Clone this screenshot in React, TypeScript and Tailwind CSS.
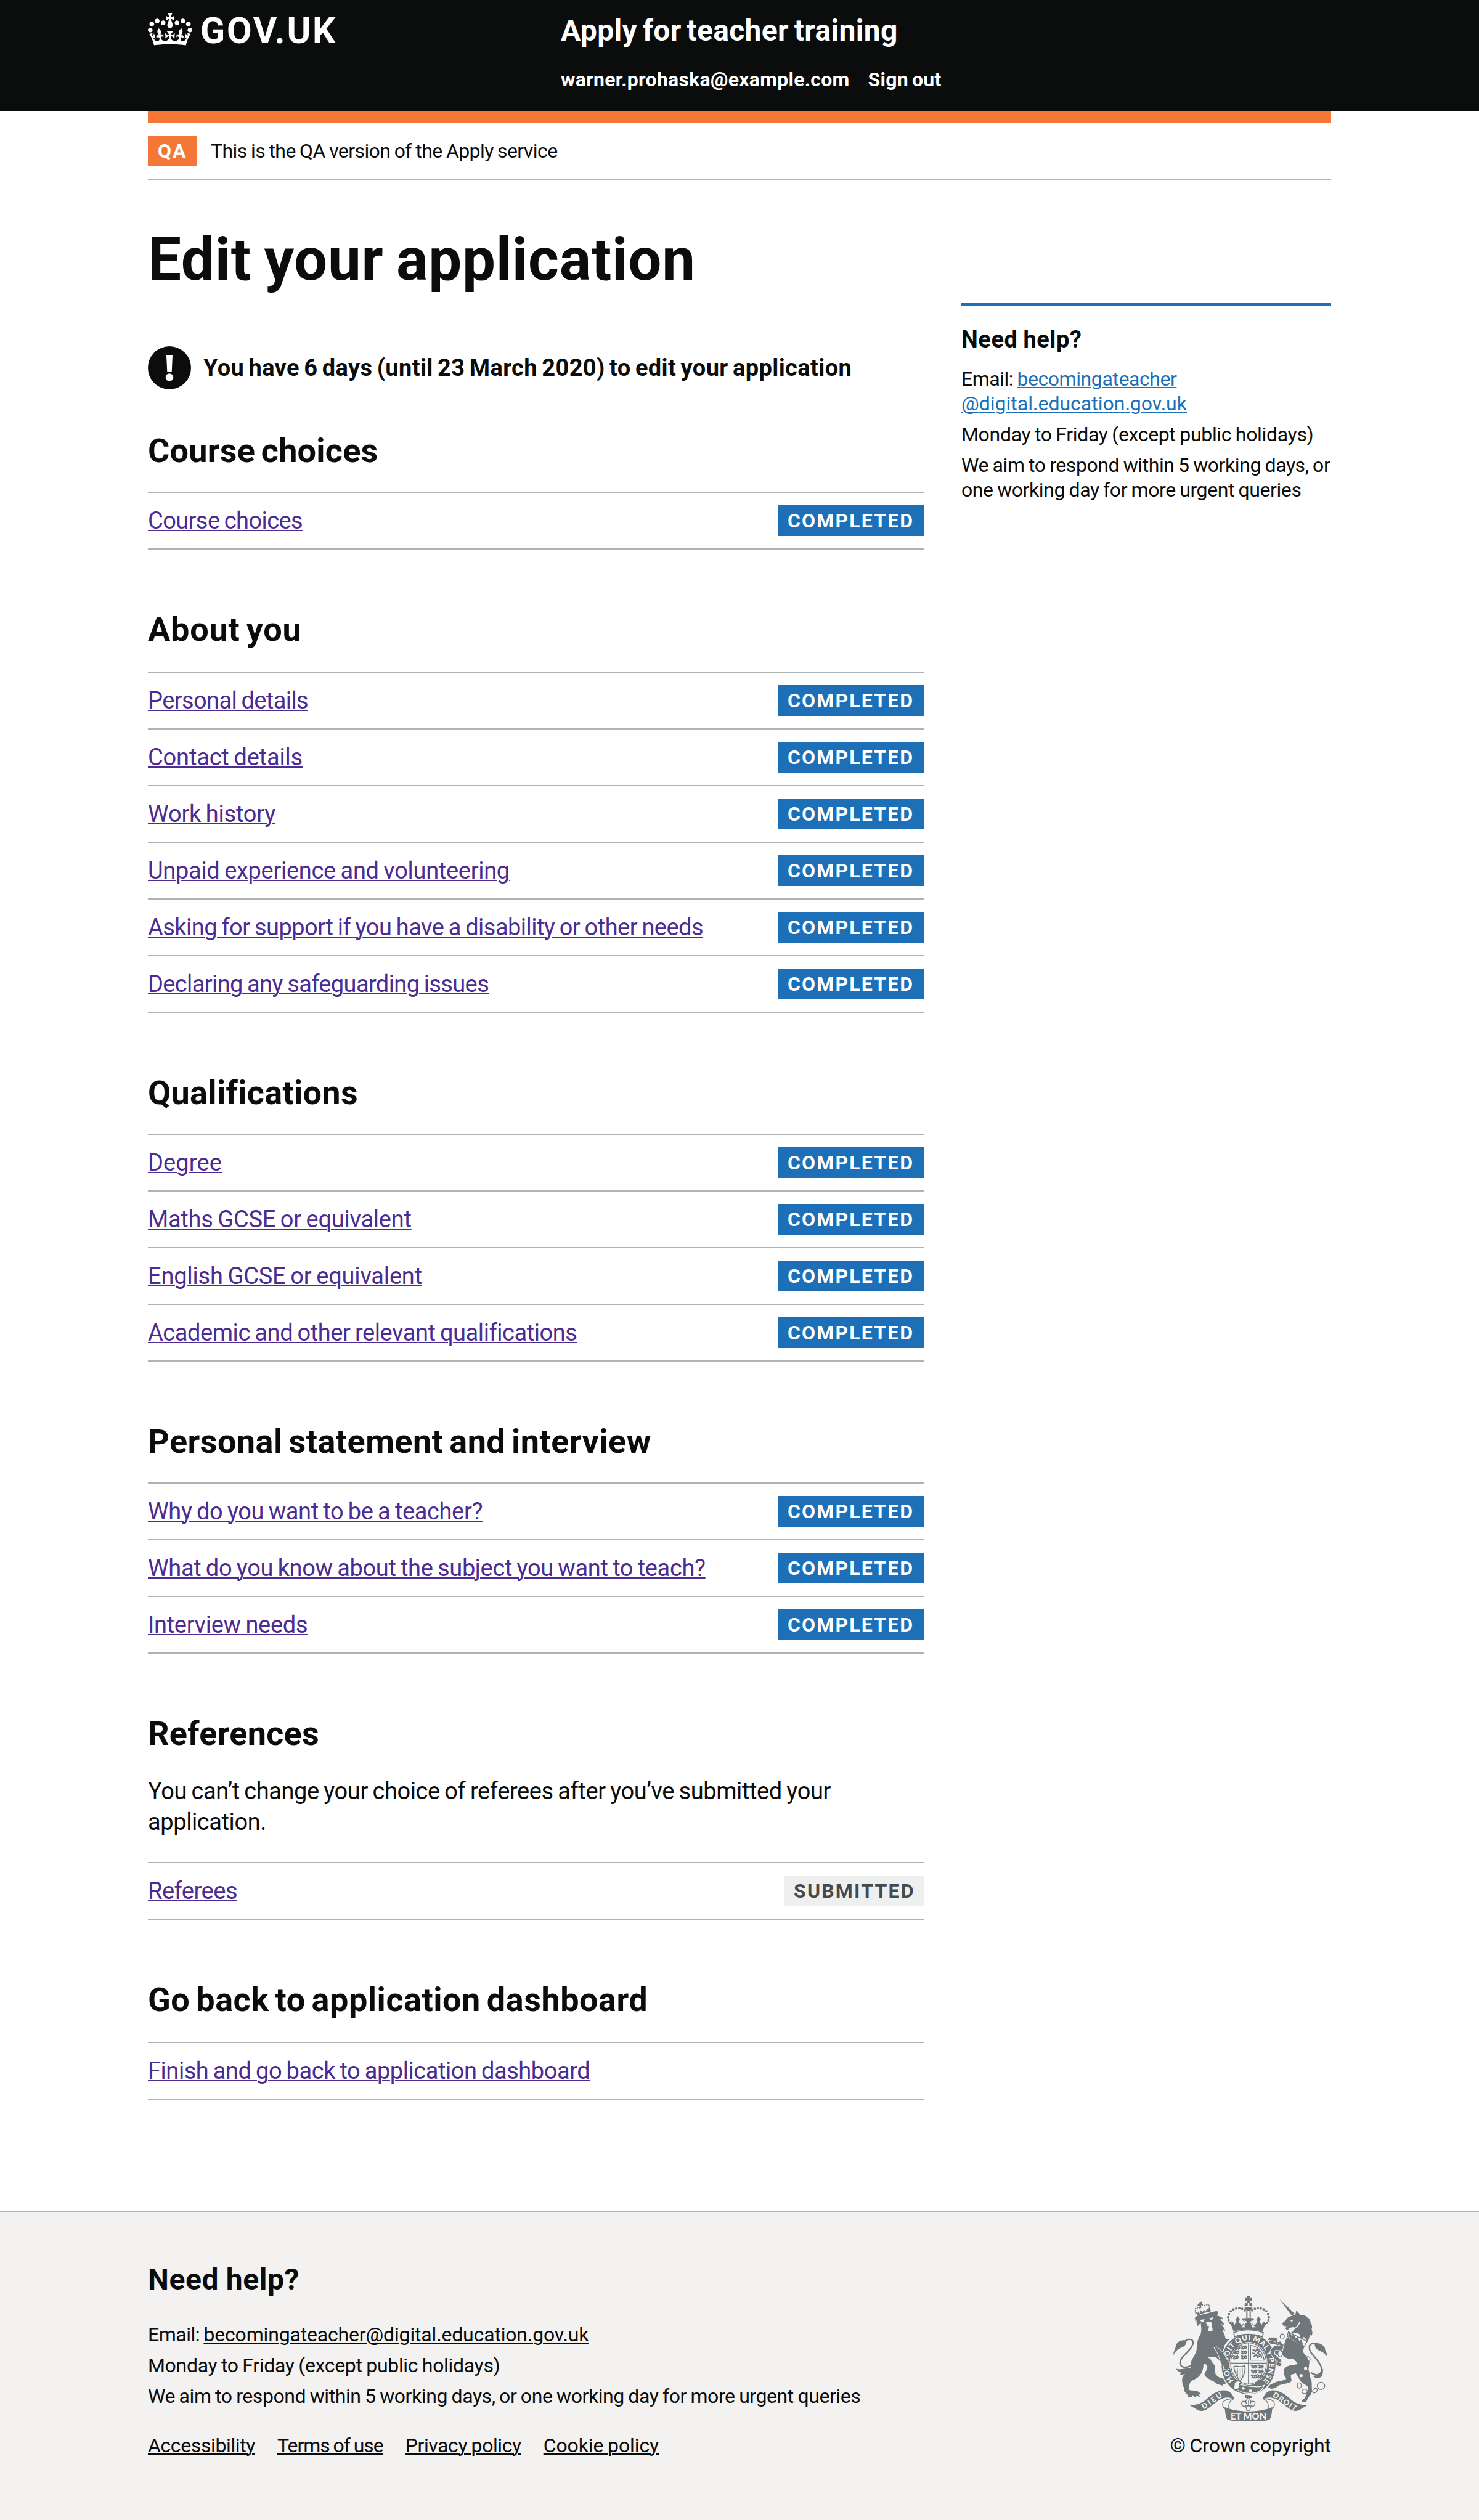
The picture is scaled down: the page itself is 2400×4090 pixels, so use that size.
import type { ReactNode } from 'react';

type Status = 'Completed' | 'Submitted';

interface Task {
  label: string;
  tracking: string;
  status?: Status;
}

interface TaskSection {
  title: string;
  tracking: string;
  spacing: string;
  intro?: ReactNode;
  tasks: Task[];
}

const sections: TaskSection[] = [
  {
    title: 'Course choices',
    tracking: 'tracking-[0.23px]',
    spacing: 'mt-[70px] mb-9',
    tasks: [{ label: 'Course choices', tracking: 'tracking-[-0.59px]', status: 'Completed' }],
  },
  {
    title: 'About you',
    tracking: 'tracking-[0.76px]',
    spacing: 'mt-[100px] mb-[38px]',
    tasks: [
      { label: 'Personal details', tracking: 'tracking-[-0.6px]', status: 'Completed' },
      { label: 'Contact details', tracking: 'tracking-[-0.17px]', status: 'Completed' },
      { label: 'Work history', tracking: 'tracking-[-0.21px]', status: 'Completed' },
      { label: 'Unpaid experience and volunteering', tracking: 'tracking-[-0.3px]', status: 'Completed' },
      {
        label: 'Asking for support if you have a disability or other needs',
        tracking: 'tracking-[-0.53px]',
        status: 'Completed',
      },
      { label: 'Declaring any safeguarding issues', tracking: 'tracking-[-0.62px]', status: 'Completed' },
    ],
  },
  {
    title: 'Qualifications',
    tracking: 'tracking-[0.31px]',
    spacing: 'mt-[100px] mb-9',
    tasks: [
      { label: 'Degree', tracking: 'tracking-[0.12px]', status: 'Completed' },
      { label: 'Maths GCSE or equivalent', tracking: 'tracking-[-0.24px]', status: 'Completed' },
      { label: 'English GCSE or equivalent', tracking: 'tracking-[-0.18px]', status: 'Completed' },
      { label: 'Academic and other relevant qualifications', tracking: 'tracking-[-0.44px]', status: 'Completed' },
    ],
  },
  {
    title: 'Personal statement and interview',
    tracking: 'tracking-[0.45px]',
    spacing: 'mt-[100px] mb-9',
    tasks: [
      { label: 'Why do you want to be a teacher?', tracking: 'tracking-[-0.38px]', status: 'Completed' },
      {
        label: 'What do you know about the subject you want to teach?',
        tracking: 'tracking-[-0.36px]',
        status: 'Completed',
      },
      { label: 'Interview needs', tracking: 'tracking-[-0.3px]', status: 'Completed' },
    ],
  },
  {
    title: 'References',
    tracking: 'tracking-[0.27px]',
    spacing: 'mt-[100px] mb-[38px]',
    intro: (
      <p className="mb-10 text-[38px] leading-[50px] tracking-[-0.4px] [word-spacing:-1.5px]">
        You can’t change your choice of referees after you’ve submitted your
        <br />
        application.
      </p>
    ),
    tasks: [{ label: 'Referees', tracking: 'tracking-[-0.49px]', status: 'Submitted' }],
  },
  {
    title: 'Go back to application dashboard',
    tracking: 'tracking-[0.52px]',
    spacing: 'mt-[100px] mb-[38px]',
    tasks: [{ label: 'Finish and go back to application dashboard', tracking: 'tracking-[-0.45px]' }],
  },
];

const footerLinks = [
  { label: 'Accessibility', tracking: 'tracking-[-0.39px]' },
  { label: 'Terms of use', tracking: 'tracking-[-1.05px]' },
  { label: 'Privacy policy', tracking: 'tracking-[-0.43px]' },
  { label: 'Cookie policy', tracking: 'tracking-[-0.12px]' },
];

function CrownIcon() {
  return (
    <svg viewBox="0 0 132 97" className="h-[53px] w-[72px]" fill="currentColor" aria-hidden="true">
      <path d="M25 30.2c3.5 1.5 7.7-.2 9.1-3.7 1.5-3.6-.2-7.8-3.9-9.2-3.6-1.4-7.6.3-9.1 3.9-1.4 3.5.3 7.5 3.9 9zM9 39.5c3.6 1.5 7.8-.2 9.2-3.7 1.5-3.6-.2-7.8-3.9-9.1-3.6-1.5-7.6.2-9.1 3.8-1.4 3.5.3 7.5 3.8 9zM4.4 57.2c3.5 1.5 7.7-.2 9.1-3.8 1.5-3.6-.2-7.7-3.9-9.1-3.5-1.5-7.6.3-9.1 3.8-1.4 3.5.3 7.6 3.9 9.1zm38.3-21.4c3.5 1.5 7.7-.2 9.1-3.8 1.5-3.6-.2-7.7-3.9-9.1-3.6-1.5-7.6.3-9.1 3.8-1.3 3.6.4 7.7 3.9 9.1zm64.4-5.6c-3.6 1.5-7.8-.2-9.1-3.7-1.5-3.6.2-7.8 3.8-9.2 3.6-1.4 7.7.3 9.2 3.9 1.3 3.5-.4 7.5-3.9 9zm15.9 9.3c-3.6 1.5-7.7-.2-9.1-3.7-1.5-3.6.2-7.8 3.7-9.1 3.6-1.5 7.7.2 9.2 3.8 1.5 3.5-.3 7.5-3.8 9zm4.7 17.7c-3.6 1.5-7.8-.2-9.2-3.8-1.5-3.6.2-7.7 3.9-9.1 3.6-1.5 7.7.3 9.2 3.8 1.3 3.5-.4 7.6-3.9 9.1zM89.3 35.8c-3.6 1.5-7.8-.2-9.2-3.8-1.4-3.6.2-7.7 3.9-9.1 3.6-1.5 7.7.3 9.2 3.8 1.4 3.6-.3 7.7-3.9 9.1zM69.7 17.7l8.9 4.7V9.3l-8.9 2.8c-.2-.3-.5-.6-.9-.9L72.4 0H59.6l3.5 11.2c-.3.3-.6.5-.9.9l-8.8-2.8v13.1l8.8-4.7c.3.3.6.7.9.9l-5 15.4v.1c-.2.8-.4 1.6-.4 2.4 0 4.1 3.1 7.5 7 8.1h.2c.3 0 .7.1 1 .1.4 0 .7 0 1-.1h.2c4-.6 7.1-4.1 7.1-8.1 0-.8-.1-1.7-.4-2.4V34l-5.1-15.4c.4-.2.7-.6 1-.9zM66 92.8c16.9 0 32.8 1.1 47.1 3.2 4-16.9 8.9-26.7 14-33.5l-9.6-3.4c1 4.9 1.1 7.2 0 10.2-1.5-1.4-3-4.3-4.2-8.7L108.6 76c2.8-2 5-3.2 7.5-3.3-4.4 9.4-10 11.9-13.6 11.2-4.3-.8-6.3-4.6-5.6-7.9 1-4.7 5.7-5.9 8-.5 4.3-8.7-3-11.4-7.6-8.8 7.1-7.2 7.9-13.5 2.1-21.1-8 6.1-8.1 12.3-4.5 20.8-4.7-5.4-12.1-2.5-9.5 6.2 3.4-5.2 7.9-2 7.2 3.1-.6 4.3-6.4 7.8-13.5 7.2-10.3-.9-10.9-8-11.2-13.8 2.5-.5 7.1 1.8 11 7.3L80.2 60c-4.1 4.4-8 5.3-12.3 5.4 1.4-4.4 8-11.6 8-11.6H55.5s6.4 7.2 7.9 11.6c-4.2-.1-8-1-12.3-5.4l1.4 16.4c3.9-5.5 8.5-7.7 10.9-7.3-.3 5.8-.9 12.8-11.1 13.8-7.2.6-12.9-2.9-13.5-7.2-.7-5 3.8-8.3 7.1-3.1 2.7-8.7-4.6-11.6-9.4-6.2 3.7-8.5 3.6-14.7-4.6-20.8-5.8 7.6-5 13.9 2.2 21.1-4.7-2.6-11.9.1-7.7 8.8 2.3-5.5 7.1-4.2 8.1.5.7 3.3-1.3 7.1-5.7 7.9-3.5.7-9-1.8-13.5-11.2 2.5.1 4.7 1.3 7.5 3.3l-4.7-15.4c-1.2 4.4-2.7 7.2-4.3 8.7-1.1-3-.9-5.3 0-10.2l-9.5 3.4c5 6.9 9.9 16.7 14 33.5 14.8-2.1 30.8-3.2 47.7-3.2z" />
    </svg>
  );
}

function WarningIcon() {
  return (
    <svg viewBox="0 0 70 70" className="size-[70px] shrink-0" aria-hidden="true">
      <circle cx="35" cy="35" r="35" fill="#0b0c0c" />
      <path d="M30 14h10l-1.3 28h-7.4z" fill="#fff" />
      <circle cx="35" cy="50.5" r="6.2" fill="#fff" />
    </svg>
  );
}

const crownPearls: [number, number][] = [
  [420, 149], [407, 142], [393, 139], [378, 140], [364, 145], [352, 154], [343, 167], [339, 182], [341, 197], [348, 210],
];

const heraldicLions: [number, number][] = [
  [368, 332], [364, 354], [360, 378], [400, 330], [400, 354], [400, 378],
  [450, 424], [450, 448], [450, 472], [482, 424], [482, 448], [478, 470],
];

function RoyalArms() {
  const ink = '#6f777b';
  const paper = '#f3f2f1';
  return (
    <svg viewBox="72 78 750 612" className="h-[204px] w-[250px]" role="img" aria-label="Royal coat of arms">
      <defs>
        <path id="garter" d="M438 526 A100 116 0 0 1 438 294 A100 116 0 0 1 438 526" />
      </defs>

      {/* Lion's tail */}
      <g fill="none" stroke={ink} strokeWidth="7">
        <path d="M178 405c-30 25-62 28-72 8-14-36 68-72 62-112-4-14-28-14-44 2" />
      </g>
      <path fill={ink} d="M72 367c0-22 14-34 12-48 8-18 28-30 52-22 0 14-6 26-18 30-18 8-34 16-46 40zM84 432c22 10 34-2 62 0 12-2 16-10 20-16-4 24-20 38-36 42-8 3-16 5-26 3l6-8c-12-4-20-10-26-21z" />

      {/* Lion */}
      <path
        fill={ink}
        d="M174 192l12-16 96-24 6 3v12l-4 8c12 2 24 8 34 17l-18 1c10 8 17 18 21 30l-17-8c10 13 18 22 21 34l-15-5c4 10 12 22 14 34 1 8 5 12 20 13-10 10-20 22-26 35 12 18 22 40 26 58l5 28 2 22-12 8-20-4-10-14 8-6-12-12c-8-10-14-24-32-30-10-3-24 2-34 2 10 6 16 8 18 18l10 14c8 4 12 18 6 30 0 14 8 26 20 34 12 6 24 4 32 14l10 10-12 3 6 9-14-2-2 8-28-8c-8-10-18-12-30-18-12-10-26-14-32-28 4-14 14-22 15-38l-10-16-9 4c-1 22-5 40-20 56-12 14-28 18-42 28-8 12-10 26-8 40 12 6 32 0 46 10l14 12-12 1 4 11-16-4-6 8-12-12-8 12-14-4-6-12c-12-8-16-20-15-32-8-14-10-28-9-46 4-14 12-24 28-28 14-12 14-36 16-54 8-20 22-34 26-56 2-30 4-50 20-78 6-22 2-38 0-54l-14 16c-6-10-8-20-5-32l-7 8c-2-14 0-24 5-34z"
      />
      <g fill={paper}>
        <path d="M200 196l24-4-4 12c-8 4-14-1-20-8zM246 188l22-6-6 11c-8 4-13 0-16-5zM226 212c10-8 24-6 36-2l-4 12 6 22c-2 10-18 12-22 2l4-20-16-4 8-6z" />
      </g>

      {/* Lion's crown */}
      <path fill={ink} d="M180 158l8 10 4-14 8 10 6-16 8 12 6-16 8 12 8-14 12-4 6 10-2 8c-20 2-42 8-60 19z" />
      <g fill="none" stroke={ink} strokeWidth="8" strokeLinecap="round" strokeDasharray="0.1 10.5">
        <path d="M182 162c-8-22 2-32 22-24M248 146c2-24-10-34-30-14" />
      </g>
      <path fill={ink} d="M198 110l14-4 2 6-5 3 8 4-2 8-8-3 1 14-7 1-2-14-7 5-3-8 8-4-1-4z" />

      {/* Unicorn's tail */}
      <g fill="none" stroke={ink} strokeWidth="7">
        <path d="M742 452c26 22 56 10 51-22-10-48-70-70-57-110 8-14 30-12 42 0" />
      </g>
      <path fill={ink} d="M822 377c0-22-12-28-12-44-10-18-30-28-50-22 0 16 8 28 22 34 16 6 28 14 40 32zM752 470c14 14 36 12 46-4l4-34c-10 18-24 30-50 38z" />

      {/* Unicorn */}
      <path fill={ink} d="M588 93l74 72-14 10z" />
      <path
        fill={ink}
        d="M601 213l18-15c6-14 16-18 30-22l18-8 3-18 10 8 10 14c14-2 26 2 34 12 12 6 16 16 16 28 8 8 10 18 5 28l4 16-2 16c-6-2-8-4-12-2 0 12-4 26-14 38-2-14-4-22-14-30-4 8-6 14-6 24-8-8-14-20-12-34-8-8-20-10-30-9l-12-2c10-4 12-16 14-30-4 6-16 4-22 8l-12 12-10-10 8-10-16-2z"
      />
      <circle cx="648" cy="199" r="5" fill={paper} />
      <path fill="none" stroke={paper} strokeWidth="5" d="M630 250c26-6 50-18 58-46" />
      <path fill={paper} stroke={ink} strokeWidth="4" d="M632 254l90 46-12 24-84-48z" />
      <path fill={ink} d="M630 274l10-20 8 20 12-8 6 20 12-8 6 20 12-6 6 20-2 6z" />
      <path
        fill={ink}
        d="M624 280l86 45-8 26c14 18 28 32 32 52l-4 36c8 18 6 36 14 52 4 16 0 34 4 52l-8 18c-10 8-16 22-22 36h-20l2-12 14-10c4-20 14-28 14-50-2-10-22-18-34-28l-26-42-24 8c-2 16 8 26 0 34-14 8-36 10-56 16-10 8-20 16-38 18l-18-6 12-14 30-14c20-4 36-6 48-14-10-14-14-28-12-44 8-16 24-22 46-24l22-4c-6-12-14-18-20-24-22 2-42-6-56-22-10-6-24-6-30 2l14 22 14 20-8 12-16-4c-10-14-20-22-26-38l-6-28-16-6 2-10c10-2 18 2 24 6l28-4 26 2-18-16-22-8c-10-6-22-2-32 0l-10-10 12-10 22 2c16 4 28 14 38 26l14 4c0-12 2-26 10-38z"
      />
      <g fill={paper}>
        <circle cx="586" cy="297" r="7" />
        <circle cx="716" cy="432" r="8" />
        <circle cx="694" cy="467" r="8" />
      </g>
      <g fill="none" stroke={ink} strokeWidth="4">
        <ellipse cx="602" cy="277" rx="10" ry="13" />
        <ellipse cx="725" cy="387" rx="13" ry="12" />
        <ellipse cx="685" cy="515" rx="10" ry="13" />
        <ellipse cx="711" cy="544" rx="13" ry="11" />
        <ellipse cx="761" cy="540" rx="13" ry="9" transform="rotate(-45 761 540)" />
        <circle cx="791" cy="517" r="18" />
      </g>

      {/* Garter */}
      <path fill={ink} stroke={paper} strokeWidth="5" d="M438 262c80 0 134 62 134 146 0 88-56 152-134 152-80 0-134-64-134-152 0-84 56-146 134-146z" />
      <ellipse cx="438" cy="408" rx="92" ry="105" fill={paper} />
      <text fill={paper} fontFamily="Lato, sans-serif" fontWeight="900" fontSize="36" wordSpacing="-4">
        <textPath href="#garter" startOffset="82" textLength="518">HON SOIT QUI MAL Y PENSE</textPath>
      </text>

      {/* Shield */}
      <ellipse cx="438" cy="408" rx="87" ry="100" fill="none" stroke={ink} strokeWidth="4" />
      <path fill="none" stroke={ink} strokeWidth="5" d="M438 308v200M351 407h174" />
      <g fill="none" stroke={ink} strokeWidth="5" strokeLinejoin="round">
        {heraldicLions.map(([x, y]) => (
          <path key={`${x}-${y}`} d={`M${x} ${y - 4}l6-5 5 6 8-2 6 3M${x + 3} ${y + 7}l5-7 3 8 7-7 5 8M${x + 22} ${y - 10}l6 8-3 8`} />
        ))}
        <path strokeWidth="4" d="M448 392v-72c36 4 60 34 66 72z" />
        <path strokeWidth="7" d="M458 340l14 8 8-10 10 12-8 8 14 8 8 14M464 376l12-12 6 14 10-6M456 358l12 2" />
        <path strokeWidth="5" d="M366 424c18-10 30 8 52-6l4 12c-2 30-12 46-26 66-10-20-26-40-30-72z" />
        <path strokeWidth="3" d="M376 430l2 26M384 432l1 38M392 434v48M400 434v50M408 432v38" />
      </g>
      <path fill={ink} d="M462 514l26-30 26 22c-12 10-20 14-32 16z" />

      {/* Buckle */}
      <path fill={ink} stroke={paper} strokeWidth="4" d="M376 506c28 4 50 12 76 14 24 2 40 4 62-6l-12 22c-38 26-90 22-126-6z" />
      <g fill={paper}>
        <circle cx="412" cy="529" r="7" />
        <circle cx="447" cy="541" r="7" />
      </g>
      <path fill={paper} stroke={ink} strokeWidth="6" d="M372 500c8-12 26-10 30 2-8 2-10 8-8 14 2 8-4 20-16 20-14 0-18-14-10-22-2-4 0-10 4-14z" />

      {/* Lion's forepaw over the garter */}
      <path fill={ink} stroke={paper} strokeWidth="3" d="M282 326c22 16 40 34 48 58l14 20 2 28-10 8-22-4 4-12-16-16c-4-24-14-54-32-76z" />

      {/* Unicorn's forelegs over the garter */}
      <path
        fill={ink}
        stroke={paper}
        strokeWidth="3"
        d="M528 294l12-14 24 0c18 6 28 16 36 30l10 6-6 30-36-2c-6 6-6 14 0 22l30 24 2 16-18-6-30-28c-8-14-10-26-4-36l18-14 26-2-28-20z"
      />
      <circle cx="584" cy="297" r="7" fill={paper} />
      <ellipse cx="592" cy="361" rx="11" ry="15" fill={paper} stroke={ink} strokeWidth="4" />

      {/* Imperial crown */}
      <path fill={paper} stroke={ink} strokeWidth="5" d="M366 258c44-18 100-18 144 0l-4 20c-42-16-94-16-136 0z" />
      <path
        fill={ink}
        d="M366 254l-10-28-10-14 10 2-2-12 10 6 6 12 10-16-6-10 12-16 10 16-6 12 14 16 10-8 8 8-2-14-12-12v-8l28-2 28 2v8l-12 12-2 14 8-8 10 8 14-16-6-12 10-16 12 16-6 10 10 16 6-12 10-6-2 12 10-2-10 14-10 28c-46-16-98-16-144 0z"
      />
      <path fill={paper} d="M400 232l16-14 6 14zM474 232l-16-14-6 14zM418 196l14 10-14 12zM458 196l-14 10 14 12z" />
      <g fill={ink}>
        {crownPearls.map(([x, y]) => (
          <g key={`${x}-${y}`}>
            <circle cx={x} cy={y} r="6" />
            <circle cx={876 - x} cy={y} r="6" />
          </g>
        ))}
        <path d="M427 150h6v36h-6zM443 150h6v36h-6zM418 132h40c-2 12-10 20-20 20s-18-8-20-20zM418 128c2-12 8-18 16-19v19zM458 128c-2-12-8-18-16-19v19z" />
        <path d="M428 78h20l-6 12 14-6v22l-14-6 4 12h-16l4-12-14 6V84l14 6z" />
      </g>

      {/* Pendant fleur-de-lis */}
      <path fill={ink} d="M421 560l34 4v12h-34z" />
      <path
        fill={paper}
        stroke={ink}
        strokeWidth="4"
        d="M438 572l12 20-4 12c8-18 24-16 24 0-2 10-8 14-14 12l-8 6-4 14h-14l-4-14-8-6c-8 2-14-4-14-12 0-16 18-18 24 0l-4-12z"
      />
      <path fill={ink} d="M436 586h4v26h-4zM420 612h36v5h-36z" />

      {/* Motto ribbon */}
      <g fill={paper} stroke={ink} strokeWidth="4">
        <path d="M366 580c-26-2-52 6-54 24-1 12 6 22 12 24l20-4c-6-14 0-34 22-44zM510 580c26-2 52 6 54 24 1 12-6 22-12 24l-20-4c6-14 0-34-22-44z" />
      </g>
      <g fill={ink}>
        <path d="M147 609c42 4 66-8 92-32 26-24 58-42 88-38 22 4 34 18 42 42-18-8-38-10-52-4-30 8-52 36-82 54-12 8-26 10-40 6zM729 609c-42 4-66-8-92-32-26-24-58-42-88-38-22 4-34 18-42 42 18-8 38-10 52-4 30 8 52 36 82 54 12 8 26 10 40 6z" />
        <path d="M322 620c64 28 168 28 232 0-2 24-4 44-12 60-14 14-190 14-208 0-8-16-10-36-12-60z" />
      </g>
      <g fill={paper} fontFamily="Lato, sans-serif" fontWeight="900" textAnchor="middle">
        <text fontSize="36" transform="translate(266 600) rotate(-34)" textLength="112">DIEU</text>
        <text fontSize="36" transform="translate(608 603) rotate(34)" textLength="132">DROIT</text>
        <text fontSize="44" x="438" y="680" textLength="174">ET MON</text>
      </g>
    </svg>
  );
}

function StatusTag({ status }: { status: Status }) {
  return status === 'Completed' ? (
    <strong className="block h-[50px] w-[238px] bg-[#1d70b8] pl-4 text-[32px] leading-[50px] font-bold tracking-[2.15px] text-white uppercase">
      {status}
    </strong>
  ) : (
    <strong className="block h-[50px] w-[228px] bg-[#eeefef] pl-4 text-[32px] leading-[50px] font-bold tracking-[2.2px] text-[#454a4d] uppercase">
      {status}
    </strong>
  );
}

function TaskList({ section }: { section: TaskSection }) {
  return (
    <section>
      <h2 className={`${section.spacing} ${section.tracking} text-[54px] leading-[60px] font-bold [word-spacing:-4px]`}>
        {section.title}
      </h2>
      {section.intro}
      <ul className="border-t-2 border-[#b1b4b6]">
        {section.tasks.map((task) => (
          <li key={task.label} className="flex h-[92px] items-center justify-between border-b-2 border-[#b1b4b6]">
            <a
              href="#"
              className={`${task.tracking} text-[38px] leading-[50px] text-[#4c2c92] underline decoration-2 underline-offset-2 [word-spacing:-1.5px]`}
            >
              {task.label}
            </a>
            {task.status && <StatusTag status={task.status} />}
          </li>
        ))}
      </ul>
    </section>
  );
}

function Header() {
  return (
    <header className="h-[180px] bg-[#0b0c0c] text-white">
      <div className="mx-auto flex w-[1920px] pt-5">
        <a href="#" className="flex w-[670px] items-start">
          <span className="pt-px">
            <CrownIcon />
          </span>
          <span className="ml-[13px] text-[59px] leading-[60px] font-bold tracking-[2.7px]">GOV.UK</span>
        </a>
        <div>
          <a href="#" className="block text-[48px] leading-[60px] font-bold tracking-[0.33px] [word-spacing:-3.5px]">
            Apply for teacher training
          </a>
          <nav className="mt-[29px] flex gap-[30px] text-[32px] leading-10 font-bold tracking-[0.25px]">
            <span>warner.prohaska@example.com</span>
            <a href="#" className="[word-spacing:-2px]">
              Sign out
            </a>
          </nav>
        </div>
      </div>
    </header>
  );
}

function EnvironmentBanner() {
  return (
    <div className="mx-auto flex w-[1920px] items-center border-t-20 border-b-2 border-t-[#f47738] border-b-[#b1b4b6] py-5">
      <strong className="h-[50px] w-20 bg-[#f47738] pl-4 text-[32px] leading-[50px] font-bold tracking-[2px] text-white">
        QA
      </strong>
      <span className="ml-[22px] text-[32px] leading-[50px] tracking-[-0.59px] [word-spacing:-1px]">
        This is the QA version of the Apply service
      </span>
    </div>
  );
}

function HelpSidebar() {
  return (
    <aside className="mt-[121px] w-[600px] self-start border-t-4 border-[#1d70b8] pt-[30px] text-[32px] leading-10 [word-spacing:-1px]">
      <h2 className="mb-[19px] text-[38px] leading-[50px] font-bold tracking-[0.55px]">Need help?</h2>
      <p className="mb-2.5">
        <span className="tracking-[-0.5px]">Email: </span>
        <a href="#" className="text-[#1d70b8] underline decoration-2 underline-offset-2">
          <span className="tracking-[-0.43px]">becomingateacher</span>
          <br />
          @digital.education.gov.uk
        </a>
      </p>
      <p className="mb-2.5 tracking-[-0.32px]">Monday to Friday (except public holidays)</p>
      <p className="tracking-[-0.42px] whitespace-nowrap">
        We aim to respond within 5 working days, or
        <br />
        one working day for more urgent queries
      </p>
    </aside>
  );
}

function Footer() {
  return (
    <footer className="h-[502px] border-t-2 border-[#b1b4b6] bg-[#f3f2f1] pt-20">
      <div className="mx-auto flex w-[1920px] items-end justify-between text-[32px] leading-10 [word-spacing:-1px]">
        <div>
          <h2 className="mb-[39px] text-[48px] leading-[60px] font-bold tracking-[0.6px]">Need help?</h2>
          <ul className="flex flex-col gap-2.5">
            <li>
              <span className="tracking-[-0.5px]">Email: </span>
              <a href="#" className="tracking-[-0.17px] underline decoration-2 underline-offset-2">
                becomingateacher@digital.education.gov.uk
              </a>
            </li>
            <li className="tracking-[-0.32px]">Monday to Friday (except public holidays)</li>
            <li className="tracking-[-0.42px]">
              We aim to respond within 5 working days, or one working day for more urgent queries
            </li>
          </ul>
          <ul className="mt-10 flex gap-9">
            {footerLinks.map((link) => (
              <li key={link.label}>
                <a href="#" className={`${link.tracking} underline decoration-2 underline-offset-2`}>
                  {link.label}
                </a>
              </li>
            ))}
          </ul>
        </div>
        <div className="flex flex-col items-center gap-[19px]">
          <RoyalArms />
          <span className="tracking-[-0.1px]">© Crown copyright</span>
        </div>
      </div>
    </footer>
  );
}

export default function App() {
  return (
    <div className="min-h-[4090px] bg-white font-['Roboto',sans-serif] text-[#0b0c0c]">
      <Header />
      <EnvironmentBanner />
      <main className="mx-auto flex w-[1920px] gap-[60px] pt-[79px] pb-[180px]">
        <div className="w-[1260px]">
          <h1 className="text-[96px] leading-[100px] font-bold tracking-[0.75px] [word-spacing:-4px]">
            Edit your application
          </h1>
          <div className="mt-[91px] flex items-center gap-5">
            <WarningIcon />
            <strong className="text-[38px] leading-[50px] font-bold tracking-[0.38px] [word-spacing:-2.5px]">
              You have 6 days (until 23 March 2020) to edit your application
            </strong>
          </div>
          {sections.map((section) => (
            <TaskList key={section.title} section={section} />
          ))}
        </div>
        <HelpSidebar />
      </main>
      <Footer />
    </div>
  );
}
